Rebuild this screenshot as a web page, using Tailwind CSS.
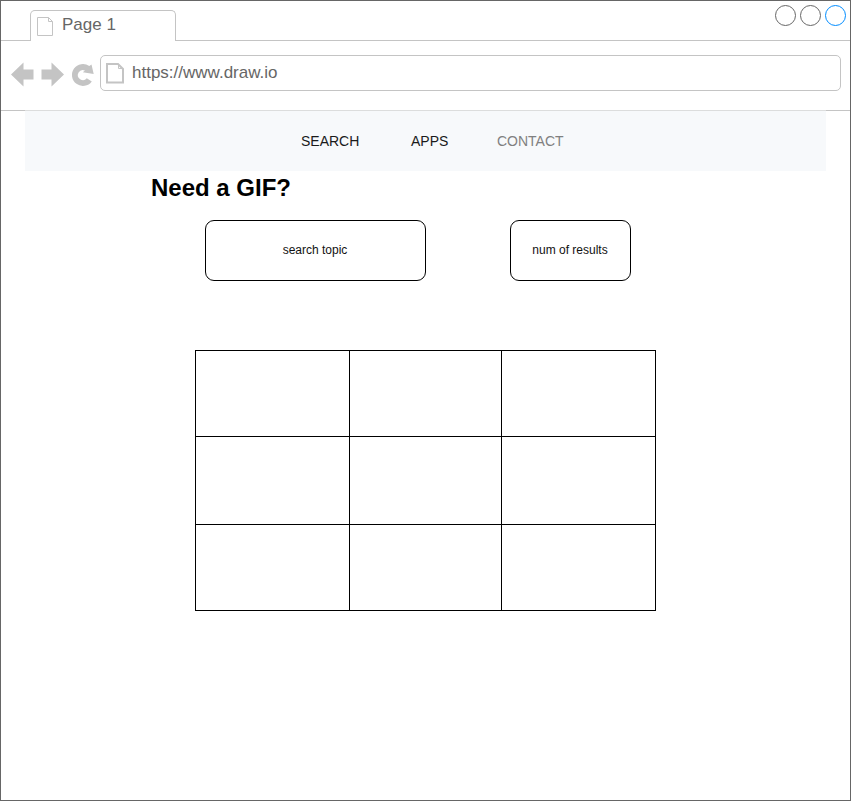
<!DOCTYPE html>
<html lang="en">
<head>
<meta charset="utf-8">
<title>Page 1</title>
<script src="https://cdn.jsdelivr.net/npm/@tailwindcss/browser@4"></script>
</head>
<body class="bg-white">
<div class="flex h-[801px] w-[851px] flex-col overflow-hidden border border-[#666666] font-['Liberation_Sans',Arial,sans-serif]">
  <header class="flex h-10 shrink-0">
    <div class="w-[29px] border-b border-[#c4c4c4]"></div>
    <div class="mt-[9px] flex w-[146px] rounded-t-[5px] border border-b-0 border-[#c4c4c4] text-[#666666]">
      <svg class="mt-[6px] ml-[6px] h-5 w-[17px] shrink-0" viewBox="0 0 17 20" fill="none" stroke="#c4c4c4"><path d="M.5.5H11.500L15.500 4.500V18.500H.5ZM11.500.5V4.500H15.500"/></svg>
      <span class="mt-[4px] ml-[8px] text-[17px] leading-[20px]">Page 1</span>
    </div>
    <div class="flex flex-1 justify-end gap-[3px] border-b border-[#c4c4c4] pt-[3px] pr-[3px]">
      <svg class="size-[22px]" viewBox="0 0 22 22" fill="none" stroke="#666666"><circle cx="10.500" cy="11.500" r="10"/></svg>
      <svg class="size-[22px]" viewBox="0 0 22 22" fill="none" stroke="#666666"><circle cx="10.500" cy="11.500" r="10"/></svg>
      <svg class="size-[22px]" viewBox="0 0 22 22" fill="none" stroke="#008cff"><circle cx="10.500" cy="11.500" r="10"/></svg>
    </div>
  </header>
  <div class="flex h-[69px] shrink-0 items-start pt-[14px] pr-[9px]">
    <svg class="h-9 w-[99px] shrink-0" viewBox="1 55 99 36" fill="#c4c4c4">
      <path d="M11 74.500 23.500 62.500V69.500H33.500V79.500H23.500V86.500Z"/>
      <path d="M64 74.500 51.500 62.500V69.500H41.500V79.500H51.500V86.500Z"/>
      <path d="M89.300 66 91.500 64.500 93.700 74 82.800 72.300 85 70.500A5 5 0 1 0 86.800 78.200L91.800 81.500A11 11 0 1 1 89.300 66Z"/>
    </svg>
    <div class="flex h-9 flex-1 rounded-[5px] border border-[#c4c4c4] text-[#666666]">
      <svg class="mt-[7px] ml-[5px] h-[21px] w-[19px] shrink-0" viewBox="0 0 19 21" fill="none" stroke="#c4c4c4"><path stroke-width="2" d="M1 1H12L17 6V19.500H1Z"/><path d="M12.500 1V5.500H17"/></svg>
      <span class="mt-[7px] ml-[7px] text-[17px] leading-[20px]">https://www.draw.io</span>
    </div>
  </div>
  <div class="flex h-[61px] shrink-0">
    <div class="w-[24px] border-t border-[#c4c4c4]"></div>
    <nav class="flex w-[801px] border-t border-[#dcdddd] bg-[#f7f9fb] pt-[22px] text-[14px] leading-4 text-[#1a1a1a]">
      <span class="ml-[276px] w-[110px]">SEARCH</span>
      <span class="w-[86px]">APPS</span>
      <span class="text-[#808080]">CONTACT</span>
    </nav>
    <div class="flex-1 border-t border-[#c4c4c4]"></div>
  </div>
  <main>
    <h1 class="mt-[3px] ml-[150px] text-2xl leading-7 font-bold text-black">Need a GIF?</h1>
    <div class="mt-[18px] ml-[204px] flex gap-[84px] text-xs text-[#111]">
      <div class="flex h-[61px] w-[221px] items-center justify-center rounded-[9px] border border-black pr-px pb-[2px]">search topic</div>
      <div class="flex h-[61px] w-[121px] items-center justify-center rounded-[9px] border border-black pr-px pb-[2px]">num of results</div>
    </div>
    <div class="mt-[69px] ml-[194px] grid h-[261px] w-[461px] grid-cols-[153px_151px_153px] grid-rows-[85px_87px_85px] gap-px border border-black bg-black">
      <div class="bg-white"></div><div class="bg-white"></div><div class="bg-white"></div>
      <div class="bg-white"></div><div class="bg-white"></div><div class="bg-white"></div>
      <div class="bg-white"></div><div class="bg-white"></div><div class="bg-white"></div>
    </div>
  </main>
</div>
</body>
</html>
